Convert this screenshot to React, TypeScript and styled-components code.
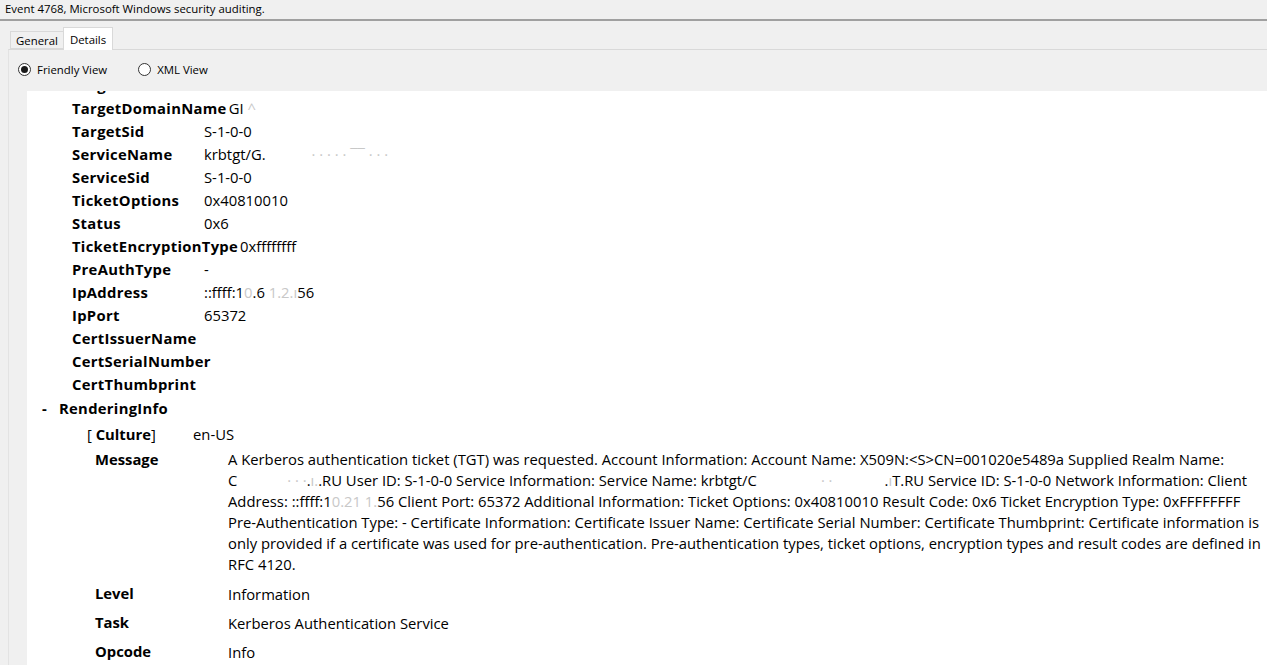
import { useEffect, useRef, type ReactNode } from "react";
import styled, { createGlobalStyle } from "styled-components";

const GlobalStyle = createGlobalStyle`
  html, body {
    margin: 0;
    background: #ffffff;
  }
  body {
    font-family: "Open Sans", "Noto Sans", sans-serif;
    color: #000000;
  }
`;

const Window = styled.div`
  width: 1267px;
  height: 665px;
  display: flex;
  flex-direction: column;
  background: #f0f0f0;
  overflow: hidden;
`;

const TitleBar = styled.div`
  height: 19px;
  line-height: 18px;
  padding-left: 5px;
  font-size: 11.4px;
  color: #000;
  white-space: nowrap;
`;

const Separator = styled.div`
  height: 2px;
  background: #a0a0a0;
`;

const TabStrip = styled.div`
  display: flex;
  align-items: flex-end;
  height: 28px;
  padding-left: 10px;
  position: relative;
  z-index: 1;
`;

const Tab = styled.div<{ $active?: boolean }>`
  box-sizing: border-box;
  height: ${(p) => (p.$active ? "23px" : "18px")};
  margin-bottom: ${(p) => (p.$active ? "-1px" : "0")};
  margin-left: ${(p) => (p.$active ? "-1px" : "0")};
  padding: 0 ${(p) => (p.$active ? "6px" : "5px")};
  display: flex;
  align-items: center;
  font-size: 11.4px;
  background: ${(p) => (p.$active ? "#ffffff" : "#f0f0f0")};
  border: 1px solid #d9d9d9;
  border-bottom: ${(p) => (p.$active ? "none" : "1px solid #d9d9d9")};
`;

const Panel = styled.div`
  flex: 1;
  min-height: 0;
  margin-left: 8px;
  display: flex;
  flex-direction: column;
  border-top: 1px solid #d9d9d9;
  border-left: 1px solid #e3e3e3;
  padding-top: 8px;
`;

const RadioRow = styled.div`
  height: 22px;
  display: flex;
  align-items: center;
  padding-left: 9px;
  font-size: 11.4px;
`;

const RadioOption = styled.label`
  display: flex;
  align-items: center;
  margin-right: 31px;
`;

const RadioCircle = styled.span<{ $checked?: boolean }>`
  box-sizing: border-box;
  width: 13px;
  height: 13px;
  border-radius: 50%;
  border: 1px solid #333333;
  background: #ffffff;
  display: flex;
  align-items: center;
  justify-content: center;
  margin-right: 6px;

  &::after {
    content: "";
    width: 7px;
    height: 7px;
    border-radius: 50%;
    background: ${(p) => (p.$checked ? "#1a1a1a" : "transparent")};
  }
`;

const Viewer = styled.div`
  flex: 1;
  min-height: 0;
  margin-top: 11px;
  margin-left: 18px;
  background: #ffffff;
  overflow: hidden;
  font-size: 14.8px;
`;

const DataRow = styled.div`
  height: 23px;
  display: flex;
  align-items: center;
  padding-left: 45px;
  white-space: nowrap;
`;

const DataLabel = styled.span`
  min-width: 130px;
  margin-right: 2px;
  font-weight: 700;
  letter-spacing: 0.3px;
`;

const SectionHeader = styled.div`
  height: 26px;
  display: flex;
  align-items: center;
  padding-left: 15px;
  font-weight: 700;
  letter-spacing: 0.3px;
`;

const Toggle = styled.span`
  width: 17px;
`;

const CultureRow = styled.div`
  height: 25px;
  display: flex;
  align-items: center;
  padding-left: 60px;
`;

const CultureLabel = styled.span`
  min-width: 106px;
`;

const Bold = styled.b`
  font-weight: 700;
`;

const DetailRow = styled.div<{ $tall?: boolean }>`
  display: flex;
  align-items: ${(p) => (p.$tall ? "flex-start" : "center")};
  height: ${(p) => (p.$tall ? "auto" : "29px")};
  padding: ${(p) => (p.$tall ? "3px 0 4px 68px" : "0 0 0 68px")};
`;

const DetailLabel = styled.span`
  width: 133px;
  flex: none;
  font-weight: 700;
  line-height: 21px;
`;

const MessageText = styled.div`
  line-height: 21px;
`;

const MessageLine = styled.div`
  white-space: nowrap;
`;

const Faint = styled.span`
  color: #c8c8c8;
`;

const Blank = styled.span<{ $w: number }>`
  display: inline-block;
  width: ${(p) => p.$w}px;
`;

type Field = [string, ReactNode];

const eventData: Field[] = [
  ["TargetUserName", "X509N:<S>CN=001020e5489a"],
  [
    "TargetDomainName",
    <>
      GI <Faint>^</Faint>
    </>,
  ],
  ["TargetSid", "S-1-0-0"],
  [
    "ServiceName",
    <>
      krbtgt/G.
      <Blank $w={46} />
      <Faint>· · · · · ‾‾ · · ·</Faint>
    </>,
  ],
  ["ServiceSid", "S-1-0-0"],
  ["TicketOptions", "0x40810010"],
  ["Status", "0x6"],
  ["TicketEncryptionType", "0xffffffff"],
  ["PreAuthType", "-"],
  [
    "IpAddress",
    <>
      ::ffff:1<Faint>0</Faint>.6<Faint> 1.2.</Faint>
      <Faint>ı</Faint>56
    </>,
  ],
  ["IpPort", "65372"],
  ["CertIssuerName", ""],
  ["CertSerialNumber", ""],
  ["CertThumbprint", ""],
];

const messageLines: ReactNode[] = [
  "A Kerberos authentication ticket (TGT) was requested. Account Information: Account Name: X509N:<S>CN=001020e5489a Supplied Realm Name:",
  <>
    C<Blank $w={50} />
    <Faint>· · ·</Faint>.<Faint>ı.</Faint>.RU User ID: S-1-0-0 Service Information: Service Name: krbtgt/C
    <Blank $w={64} />
    <Faint>· ·</Faint>
    <Blank $w={52} />
    .<Faint>ı</Faint>T.RU Service ID: S-1-0-0 Network Information: Client
  </>,
  <>
    Address: ::ffff:1<Faint>0.21</Faint> <Faint>1.</Faint>56 Client Port: 65372 Additional Information: Ticket Options: 0x40810010
    Result Code: 0x6 Ticket Encryption Type: 0xFFFFFFFF
  </>,
  "Pre-Authentication Type: - Certificate Information: Certificate Issuer Name: Certificate Serial Number: Certificate Thumbprint: Certificate information is",
  "only provided if a certificate was used for pre-authentication. Pre-authentication types, ticket options, encryption types and result codes are defined in",
  "RFC 4120.",
];

const renderingInfo: Field[] = [
  ["Level", "Information"],
  ["Task", "Kerberos Authentication Service"],
  ["Opcode", "Info"],
];

export default function App() {
  const viewerRef = useRef<HTMLDivElement>(null);

  // the details pane is scrolled a little, so the first row shows only its descenders
  useEffect(() => {
    if (viewerRef.current) viewerRef.current.scrollTop = 18;
  }, []);

  return (
    <>
      <GlobalStyle />
      <Window>
        <TitleBar>Event 4768, Microsoft Windows security auditing.</TitleBar>
        <Separator />
        <TabStrip>
          <Tab>General</Tab>
          <Tab $active>Details</Tab>
        </TabStrip>
        <Panel>
          <RadioRow>
            <RadioOption>
              <RadioCircle $checked />
              Friendly View
            </RadioOption>
            <RadioOption>
              <RadioCircle />
              XML View
            </RadioOption>
          </RadioRow>
          <Viewer ref={viewerRef}>
            {eventData.map(([label, value]) => (
              <DataRow key={label}>
                <DataLabel>{label}</DataLabel>
                <span>{value}</span>
              </DataRow>
            ))}
            <SectionHeader>
              <Toggle>-</Toggle>
              RenderingInfo
            </SectionHeader>
            <CultureRow>
              <CultureLabel>
                [ <Bold>Culture</Bold>]
              </CultureLabel>
              <span>en-US</span>
            </CultureRow>
            <DetailRow $tall>
              <DetailLabel>Message</DetailLabel>
              <MessageText>
                {messageLines.map((line, i) => (
                  <MessageLine key={i}>{line}</MessageLine>
                ))}
              </MessageText>
            </DetailRow>
            {renderingInfo.map(([label, value]) => (
              <DetailRow key={label}>
                <DetailLabel>{label}</DetailLabel>
                <span>{value}</span>
              </DetailRow>
            ))}
          </Viewer>
        </Panel>
      </Window>
    </>
  );
}
